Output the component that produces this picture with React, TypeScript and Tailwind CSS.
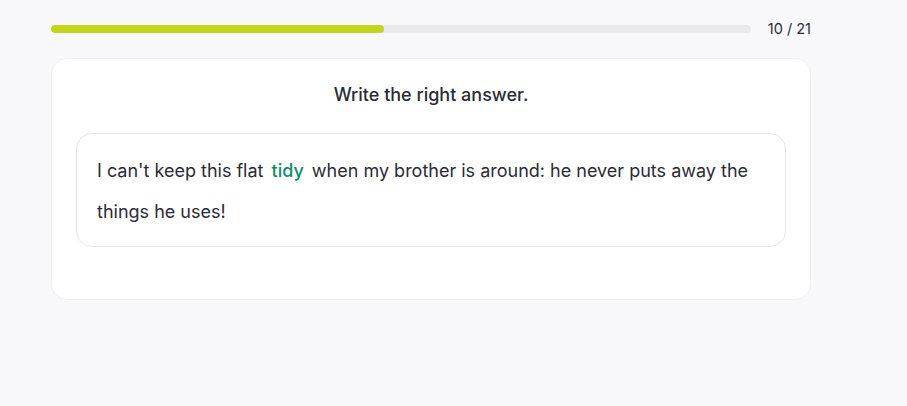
export default function App() {
  return (
    <div className="min-h-[406px] w-full bg-[#f8f8fa] font-['Inter',sans-serif] text-[#2b2b36]">
      <div className="ml-[51px] w-[760px] pt-[20px]">
        <div className="flex items-center h-[18px]">
          <div className="h-[8px] w-[700px] rounded-full bg-[#eaeaed] overflow-hidden">
            <div className="h-full w-[333px] rounded-full bg-[#c2d51a]" />
          </div>
          <div className="ml-auto text-[14.5px] leading-[18px] text-[#2b2b36]">10 / 21</div>
        </div>
        <div className="mt-[20px] w-[760px] rounded-[16px] bg-white border border-[#f0f0f2] px-[24px] pt-[23px] pb-[52px]">
          <div className="text-center text-[18px] font-medium leading-[26px] text-[#2b2b36]">
            Write the right answer.
          </div>
          <div className="mt-[25px] rounded-[16px] border border-[#e6e6ea] bg-white px-[20px] pt-[16px] pb-[14px] text-[18px] leading-[41px]">
            I can't keep this flat <span className="mx-[3px] font-medium text-[#0e8a6c]">tidy</span> when my brother is around: he never puts away the things he uses!
          </div>
        </div>
      </div>
    </div>
  );
}
